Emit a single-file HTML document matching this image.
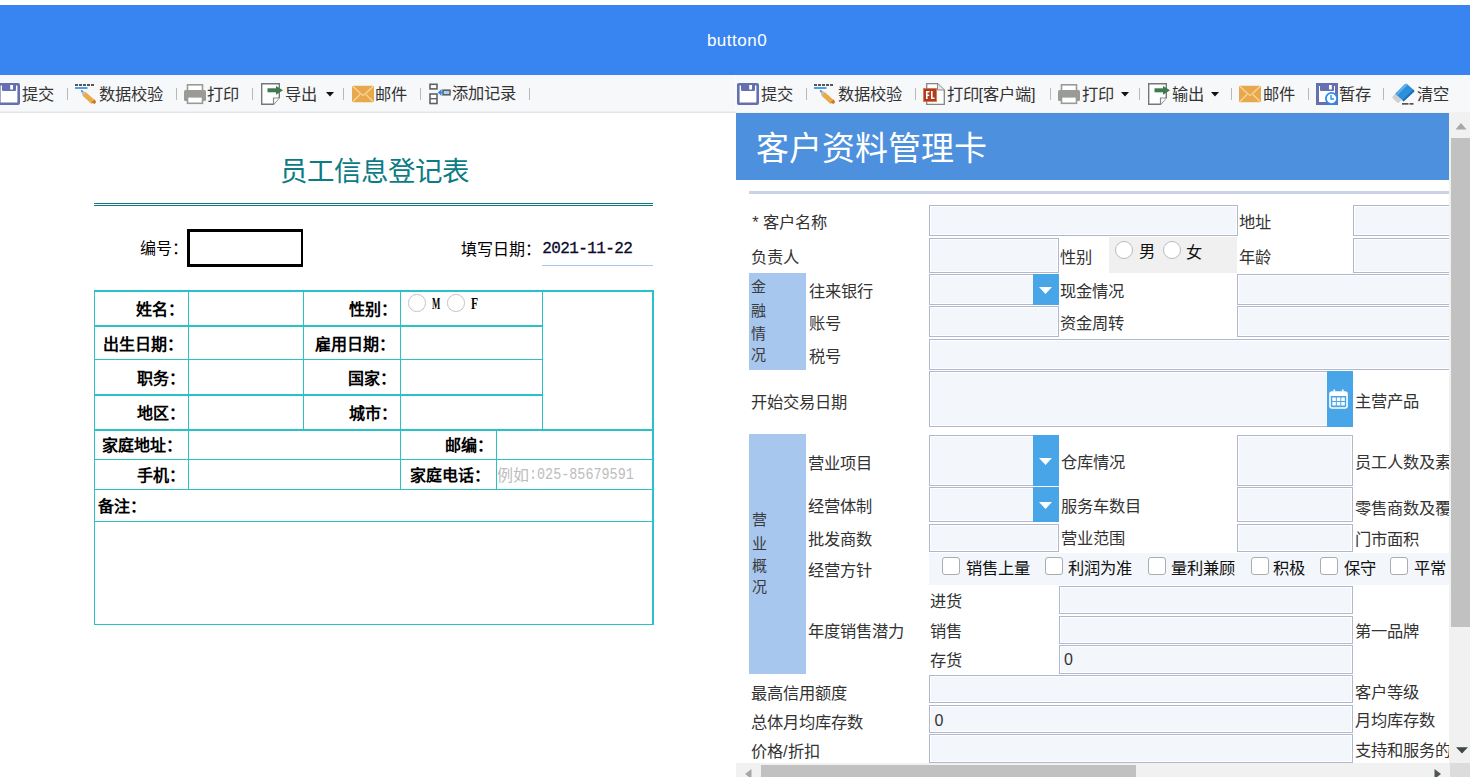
<!DOCTYPE html>
<html lang="zh-CN"><head><meta charset="utf-8"><title>form</title>
<style>
html,body{margin:0;padding:0;}
body{width:1470px;height:777px;overflow:hidden;position:relative;background:#fff;font-family:'Liberation Sans',sans-serif;}
.t{position:absolute;white-space:nowrap;}
.ab{position:absolute;}
.inp{position:absolute;box-sizing:border-box;border:1px solid #b3b7cb;background:#f3f6fa;box-shadow:inset 0 0 0 1px #fdfeff;}
.sep{position:absolute;top:88px;width:1px;height:12px;background:#b9b9b9;}
.cb{position:absolute;box-sizing:border-box;width:18px;height:18px;border:1.5px solid #a9adb0;border-radius:3px;background:#fff;}
.rd{position:absolute;box-sizing:border-box;width:18px;height:18px;border:1.5px solid #b8bcc2;border-radius:50%;background:#fff;}
</style></head><body>

<div class="ab" style="left:0px;top:5px;width:1470px;height:70px;background:#3885f1;"></div>
<div class="t" style="left:706.90px;top:33.00px;font-size:17px;line-height:16px;color:#fff;font-family:'Liberation Sans', sans-serif;letter-spacing:0.5px;">button0</div>
<div class="ab" style="left:0px;top:75px;width:1470px;height:38px;background:#f7f8fa;"></div>
<div class="ab" style="left:0px;top:111px;width:736px;height:1px;background:#eeeff2;"></div>
<div class="ab" style="left:0px;top:112px;width:736px;height:1px;background:#e3e4e7;"></div>
<div class="ab" style="left:736px;top:112px;width:734px;height:1px;background:#f4f1f1;"></div>
<div class="ab" style="left:735px;top:75px;width:1px;height:37px;background:#fbfbfc;"></div>
<svg class="ab" style="left:-2px;top:83px" width="22" height="22" viewBox="0 0 22 22">
<rect x="1.3" y="1.3" width="19.4" height="19.4" rx="0.6" fill="#fff" stroke="#6570b0" stroke-width="2.6"/>
<rect x="4" y="0" width="14" height="8" rx="1" fill="#6570b0"/>
<rect x="12.2" y="2" width="2.8" height="4.5" fill="#fff"/>
</svg>
<div class="t" style="left:22.00px;top:86.00px;font-size:16.25px;line-height:16.25px;color:#333;font-family:'Liberation Sans', sans-serif;">提交</div>
<div class="sep" style="left:67px"></div>
<svg class="ab" style="left:75px;top:83px" width="22" height="22" viewBox="0 0 22 22">
<g fill="#575757"><rect x="0" y="1" width="3" height="2"/><rect x="4" y="1" width="3" height="2"/><rect x="8" y="1" width="3" height="2"/><rect x="12" y="1" width="3" height="2"/><rect x="16" y="1" width="3" height="2"/></g>
<rect x="0" y="4" width="12.5" height="2" fill="#4aa0ea"/>
<line x1="9.3" y1="11" x2="18.2" y2="19.2" stroke="#e9ab48" stroke-width="5"/>
<path d="M5.8 7 L11.2 9.2 L7.7 12.8 Z" fill="#b9bdc6"/>
<path d="M5.8 7 L8 8 L6.9 9.3 Z" fill="#4f535a"/>
<path d="M16.5 19.5 L19.6 16.6 L21 18.4 Q21 20 19.4 21 Z" fill="#c8782a"/>
</svg>
<div class="t" style="left:98.50px;top:86.00px;font-size:16.25px;line-height:16.25px;color:#333;font-family:'Liberation Sans', sans-serif;">数据校验</div>
<div class="sep" style="left:176px"></div>
<svg class="ab" style="left:184px;top:83px" width="22" height="22" viewBox="0 0 22 22">
<rect x="3.5" y="1.8" width="15" height="8" fill="#fff" stroke="#9a9a96" stroke-width="1.6"/>
<rect x="0" y="7" width="22" height="11" rx="1.5" fill="#9a9a96"/>
<rect x="3.5" y="13.8" width="15" height="6.5" fill="#fff" stroke="#9a9a96" stroke-width="1.6"/>
</svg>
<div class="t" style="left:207.20px;top:86.00px;font-size:16.25px;line-height:16.25px;color:#333;font-family:'Liberation Sans', sans-serif;">打印</div>
<div class="sep" style="left:252px"></div>
<svg class="ab" style="left:261px;top:83px" width="22" height="22" viewBox="0 0 22 22">
<path d="M0.7 0.7 H18.3 V14.5 L12.5 21.3 H0.7 Z" fill="#fff" stroke="#777" stroke-width="1.4"/>
<path d="M12.5 21.3 V15 H18.3" fill="#fff" stroke="#888" stroke-width="1.2"/>
<rect x="6.5" y="5.3" width="9" height="4" fill="#3d7a4f"/>
<path d="M15 3 L22 7.3 L15 11.8 Z" fill="#3d7a4f"/>
</svg>
<div class="t" style="left:284.60px;top:86.00px;font-size:16.25px;line-height:16.25px;color:#333;font-family:'Liberation Sans', sans-serif;">导出</div>
<svg class="ab" style="left:326px;top:92px" width="8" height="5" viewBox="0 0 8 5"><path d="M0 0 H8 L4 4.6 Z" fill="#111"/></svg>
<div class="sep" style="left:343px"></div>
<svg class="ab" style="left:352px;top:83px" width="22" height="22" viewBox="0 0 22 22">
<rect x="0" y="2.8" width="22" height="16.4" rx="1.5" fill="#e8a84c"/>
<path d="M1 3.5 L9.5 11.5 L11 12.3 L12.5 11.5 L21 3.5" fill="none" stroke="#fbd69a" stroke-width="1.3"/>
<path d="M1 18.5 L8 11.5 M21 18.5 L14 11.5" fill="none" stroke="#fbd69a" stroke-width="1.3"/>
</svg>
<div class="t" style="left:375.20px;top:86.00px;font-size:16.25px;line-height:16.25px;color:#333;font-family:'Liberation Sans', sans-serif;">邮件</div>
<div class="sep" style="left:420px"></div>
<svg class="ab" style="left:429px;top:83px" width="22" height="22" viewBox="0 0 22 22">
<rect x="1" y="1.3" width="7" height="4.6" fill="#fff" stroke="#5f6360" stroke-width="1.6"/>
<rect x="1" y="11" width="7" height="9.5" fill="#fff" stroke="#5f6360" stroke-width="1.6"/>
<line x1="1" y1="15.7" x2="8" y2="15.7" stroke="#5f6360" stroke-width="1.4"/>
<rect x="14" y="7.2" width="7" height="4.6" fill="#a8d0f8" stroke="#5f6360" stroke-width="1.6"/>
<path d="M8.8 9.5 L12.5 6 L12.5 13 Z" fill="#2f86ef"/>
<rect x="12" y="8.7" width="2" height="1.6" fill="#2f86ef"/>
</svg>
<div class="t" style="left:452.00px;top:85.00px;font-size:16.25px;line-height:16.25px;color:#333;font-family:'Liberation Sans', sans-serif;">添加记录</div>
<div class="sep" style="left:529px"></div>
<svg class="ab" style="left:737px;top:83px" width="22" height="22" viewBox="0 0 22 22">
<rect x="1.3" y="1.3" width="19.4" height="19.4" rx="0.6" fill="#fff" stroke="#6570b0" stroke-width="2.6"/>
<rect x="4" y="0" width="14" height="8" rx="1" fill="#6570b0"/>
<rect x="12.2" y="2" width="2.8" height="4.5" fill="#fff"/>
</svg>
<div class="t" style="left:761.00px;top:86.00px;font-size:16.25px;line-height:16.25px;color:#333;font-family:'Liberation Sans', sans-serif;">提交</div>
<div class="sep" style="left:806px"></div>
<svg class="ab" style="left:814px;top:83px" width="22" height="22" viewBox="0 0 22 22">
<g fill="#575757"><rect x="0" y="1" width="3" height="2"/><rect x="4" y="1" width="3" height="2"/><rect x="8" y="1" width="3" height="2"/><rect x="12" y="1" width="3" height="2"/><rect x="16" y="1" width="3" height="2"/></g>
<rect x="0" y="4" width="12.5" height="2" fill="#4aa0ea"/>
<line x1="9.3" y1="11" x2="18.2" y2="19.2" stroke="#e9ab48" stroke-width="5"/>
<path d="M5.8 7 L11.2 9.2 L7.7 12.8 Z" fill="#b9bdc6"/>
<path d="M5.8 7 L8 8 L6.9 9.3 Z" fill="#4f535a"/>
<path d="M16.5 19.5 L19.6 16.6 L21 18.4 Q21 20 19.4 21 Z" fill="#c8782a"/>
</svg>
<div class="t" style="left:837.80px;top:86.00px;font-size:16.25px;line-height:16.25px;color:#333;font-family:'Liberation Sans', sans-serif;">数据校验</div>
<div class="sep" style="left:915px"></div>
<svg class="ab" style="left:923px;top:83px" width="22" height="22" viewBox="0 0 22 22">
<path d="M3.7 0.7 H14.5 L21.3 7 V21.3 H3.7 Z" fill="#fff" stroke="#858585" stroke-width="1.3"/>
<path d="M14.5 0.7 V7 H21.3" fill="#e8e8f0" stroke="#8a8a8a" stroke-width="1"/>
<rect x="0.3" y="5.3" width="13.4" height="13.4" fill="#b13b22"/>
<rect x="0.3" y="5.3" width="13.4" height="13.4" fill="none" stroke="#e0883a" stroke-width="0.6"/>
<path d="M3 8 H6.5 V9.5 H4.6 V11.5 H6.2 V13 H4.6 V16 H3 Z" fill="#fff"/>
<path d="M8 8 H9.6 V14.5 H11.5 V16 H8 Z" fill="#fff"/>
</svg>
<div class="t" style="left:946.60px;top:86.00px;font-size:16.25px;line-height:16.25px;color:#333;font-family:'Liberation Sans', sans-serif;">打印[客户端]</div>
<div class="sep" style="left:1050px"></div>
<svg class="ab" style="left:1058px;top:83px" width="22" height="22" viewBox="0 0 22 22">
<rect x="3.5" y="1.8" width="15" height="8" fill="#fff" stroke="#9a9a96" stroke-width="1.6"/>
<rect x="0" y="7" width="22" height="11" rx="1.5" fill="#9a9a96"/>
<rect x="3.5" y="13.8" width="15" height="6.5" fill="#fff" stroke="#9a9a96" stroke-width="1.6"/>
</svg>
<div class="t" style="left:1082.30px;top:86.00px;font-size:16.25px;line-height:16.25px;color:#333;font-family:'Liberation Sans', sans-serif;">打印</div>
<svg class="ab" style="left:1121px;top:92px" width="8" height="5" viewBox="0 0 8 5"><path d="M0 0 H8 L4 4.6 Z" fill="#111"/></svg>
<div class="sep" style="left:1139px"></div>
<svg class="ab" style="left:1148px;top:83px" width="22" height="22" viewBox="0 0 22 22">
<path d="M0.7 0.7 H18.3 V14.5 L12.5 21.3 H0.7 Z" fill="#fff" stroke="#777" stroke-width="1.4"/>
<path d="M12.5 21.3 V15 H18.3" fill="#fff" stroke="#888" stroke-width="1.2"/>
<rect x="6.5" y="5.3" width="9" height="4" fill="#3d7a4f"/>
<path d="M15 3 L22 7.3 L15 11.8 Z" fill="#3d7a4f"/>
</svg>
<div class="t" style="left:1172.30px;top:86.00px;font-size:16.25px;line-height:16.25px;color:#333;font-family:'Liberation Sans', sans-serif;">输出</div>
<svg class="ab" style="left:1211px;top:92px" width="8" height="5" viewBox="0 0 8 5"><path d="M0 0 H8 L4 4.6 Z" fill="#111"/></svg>
<div class="sep" style="left:1231px"></div>
<svg class="ab" style="left:1239px;top:83px" width="22" height="22" viewBox="0 0 22 22">
<rect x="0" y="2.8" width="22" height="16.4" rx="1.5" fill="#e8a84c"/>
<path d="M1 3.5 L9.5 11.5 L11 12.3 L12.5 11.5 L21 3.5" fill="none" stroke="#fbd69a" stroke-width="1.3"/>
<path d="M1 18.5 L8 11.5 M21 18.5 L14 11.5" fill="none" stroke="#fbd69a" stroke-width="1.3"/>
</svg>
<div class="t" style="left:1262.50px;top:86.00px;font-size:16.25px;line-height:16.25px;color:#333;font-family:'Liberation Sans', sans-serif;">邮件</div>
<div class="sep" style="left:1308px"></div>
<svg class="ab" style="left:1316px;top:83px" width="22" height="22" viewBox="0 0 22 22">
<rect x="1.5" y="1.5" width="19" height="19" fill="#fff" stroke="#6570b0" stroke-width="3"/>
<rect x="4" y="0" width="14" height="8" rx="1" fill="#6570b0"/>
<rect x="13" y="2" width="2.8" height="4.5" fill="#fff"/>
<circle cx="15.5" cy="15.5" r="5.6" fill="#fff" stroke="#2e8bef" stroke-width="1.8"/>
<path d="M15 12 V16 H18" fill="none" stroke="#2e8bef" stroke-width="1.4"/>
</svg>
<div class="t" style="left:1339.20px;top:86.00px;font-size:16.25px;line-height:16.25px;color:#333;font-family:'Liberation Sans', sans-serif;">暂存</div>
<div class="sep" style="left:1383px"></div>
<svg class="ab" style="left:1392px;top:83px" width="23" height="22" viewBox="0 0 23 22">
<path d="M3.2 10.8 L0.6 13.4 Q0 14.4 1 15.4 L5 19.4 Q6 20.2 7 19.4 L10 16.8 Z" fill="#d0d0d0"/>
<path d="M3.2 10.8 L12.8 1.2 Q13.9 0.3 15 1.1 L22 7.2 Q22.7 8 22 8.8 L11.6 18.2 Z" fill="#2e8fd9"/>
<path d="M22 7.3 Q22.7 8 22 8.8 L11.6 18.4 L10.4 17.2 L21.2 6.6 Z" fill="#1f6dc0"/>
<path d="M12.8 1.2 Q13.9 0.3 15 1.1 L15.8 1.8 L5 12.4 L3.9 11.4 Z" fill="#5bb2f2"/>
<rect x="10" y="20" width="6.5" height="1.7" fill="#555"/><rect x="17.5" y="20" width="4" height="1.7" fill="#555"/>
</svg>
<div class="t" style="left:1416.90px;top:86.00px;font-size:16.25px;line-height:16.25px;color:#333;font-family:'Liberation Sans', sans-serif;">清空</div>
<div class="t" style="left:279.80px;top:158.00px;font-size:27.5px;line-height:27.5px;color:#0b7c84;font-family:'Liberation Serif', serif;">员工信息登记表</div>
<div class="ab" style="left:94px;top:203px;width:559px;height:1px;background:#0b7c84;"></div>
<div class="ab" style="left:94px;top:205px;width:559px;height:1px;background:#0b7c84;"></div>
<div class="t" style="left:140.00px;top:241.00px;font-size:16px;line-height:16px;color:#000;font-family:'Liberation Serif', serif;">编号：</div>
<div class="ab" style="left:187px;top:229px;width:111px;height:32px;border:solid #000;border-width:3px 2px 3px 3px;"></div>
<div class="t" style="left:461.00px;top:241.50px;font-size:16px;line-height:16px;color:#000;font-family:'Liberation Serif', serif;">填写日期：</div>
<div class="t" style="left:542.20px;top:241.30px;font-size:16px;line-height:16px;color:#0a0a2a;font-family:'Liberation Mono', monospace;letter-spacing:-0.6px;-webkit-text-stroke:0.3px #0a0a2a;">2021-11-22</div>
<div class="ab" style="left:542px;top:265px;width:111px;height:1px;background:#9ecaf4;"></div>
<div class="ab" style="left:94px;top:290px;width:560px;height:2px;background:#29c3c7;"></div>
<div class="ab" style="left:94px;top:325px;width:449px;height:2px;background:#29c3c7;"></div>
<div class="ab" style="left:94px;top:359px;width:449px;height:1px;background:#29c3c7;"></div>
<div class="ab" style="left:94px;top:394px;width:449px;height:2px;background:#29c3c7;"></div>
<div class="ab" style="left:94px;top:429px;width:560px;height:2px;background:#29c3c7;"></div>
<div class="ab" style="left:94px;top:459px;width:560px;height:1px;background:#29c3c7;"></div>
<div class="ab" style="left:94px;top:489px;width:560px;height:1px;background:#29c3c7;"></div>
<div class="ab" style="left:94px;top:521px;width:560px;height:1px;background:#29c3c7;"></div>
<div class="ab" style="left:94px;top:624px;width:560px;height:1px;background:#29c3c7;"></div>
<div class="ab" style="left:94px;top:290px;width:1px;height:335px;background:#29c3c7;"></div>
<div class="ab" style="left:652px;top:290px;width:2px;height:335px;background:#29c3c7;"></div>
<div class="ab" style="left:188px;top:290px;width:1px;height:199px;background:#29c3c7;"></div>
<div class="ab" style="left:303px;top:290px;width:1px;height:139px;background:#29c3c7;"></div>
<div class="ab" style="left:400px;top:290px;width:1px;height:199px;background:#29c3c7;"></div>
<div class="ab" style="left:542px;top:290px;width:1px;height:139px;background:#29c3c7;"></div>
<div class="ab" style="left:496px;top:429px;width:1px;height:60px;background:#29c3c7;"></div>
<div class="t" style="left:136.20px;top:302.00px;font-size:16px;line-height:16px;color:#000;font-family:'Liberation Serif', serif;font-weight:bold;">姓名：</div>
<div class="t" style="left:349.10px;top:302.00px;font-size:16px;line-height:16px;color:#000;font-family:'Liberation Serif', serif;font-weight:bold;">性别：</div>
<div class="t" style="left:102.80px;top:336.80px;font-size:16px;line-height:16px;color:#000;font-family:'Liberation Serif', serif;font-weight:bold;">出生日期：</div>
<div class="t" style="left:314.90px;top:336.80px;font-size:16px;line-height:16px;color:#000;font-family:'Liberation Serif', serif;font-weight:bold;">雇用日期：</div>
<div class="t" style="left:137.30px;top:370.80px;font-size:16px;line-height:16px;color:#000;font-family:'Liberation Serif', serif;font-weight:bold;">职务：</div>
<div class="t" style="left:348.10px;top:370.80px;font-size:16px;line-height:16px;color:#000;font-family:'Liberation Serif', serif;font-weight:bold;">国家：</div>
<div class="t" style="left:137.30px;top:405.80px;font-size:16px;line-height:16px;color:#000;font-family:'Liberation Serif', serif;font-weight:bold;">地区：</div>
<div class="t" style="left:349.10px;top:405.80px;font-size:16px;line-height:16px;color:#000;font-family:'Liberation Serif', serif;font-weight:bold;">城市：</div>
<div class="t" style="left:102.30px;top:438.30px;font-size:16px;line-height:16px;color:#000;font-family:'Liberation Serif', serif;font-weight:bold;">家庭地址：</div>
<div class="t" style="left:445.30px;top:438.30px;font-size:16px;line-height:16px;color:#000;font-family:'Liberation Serif', serif;font-weight:bold;">邮编：</div>
<div class="t" style="left:137.30px;top:467.60px;font-size:16px;line-height:16px;color:#000;font-family:'Liberation Serif', serif;font-weight:bold;">手机：</div>
<div class="t" style="left:410.30px;top:467.60px;font-size:16px;line-height:16px;color:#000;font-family:'Liberation Serif', serif;font-weight:bold;">家庭电话：</div>
<div class="t" style="left:98.40px;top:499.10px;font-size:16px;line-height:16px;color:#000;font-family:'Liberation Serif', serif;font-weight:bold;">备注：</div>
<div class="rd" style="left:408px;top:294px;width:17.5px;height:17.5px;border-color:#bfc3c8"></div>
<div class="t" style="left:431.60px;top:295.60px;font-size:16px;line-height:16px;color:#000;font-family:'Liberation Serif', serif;font-weight:bold;transform:scaleX(0.55);transform-origin:0 0;">M</div>
<div class="rd" style="left:447px;top:294px;width:17.5px;height:17.5px;border-color:#bfc3c8"></div>
<div class="t" style="left:470.90px;top:295.60px;font-size:16px;line-height:16px;color:#000;font-family:'Liberation Serif', serif;font-weight:bold;transform:scaleX(0.72);transform-origin:0 0;">F</div>
<div class="t" style="left:496.80px;top:467.90px;font-size:16px;line-height:16px;color:#bdbdbd;font-family:'Liberation Sans', sans-serif;">例如<span style="display:inline-block;font-family:'Liberation Mono', monospace;font-size:17px;transform:scaleX(0.79);transform-origin:0 0;vertical-align:top;line-height:16px;position:relative;top:-0.5px">:025-85679591</span></div>
<div class="ab" style="left:736px;top:113px;width:713px;height:67px;background:#4c90de;"></div>
<div class="t" style="left:755.90px;top:133.00px;font-size:33px;line-height:32px;color:#fff;font-family:'Liberation Sans', sans-serif;">客户资料管理卡</div>
<div class="ab" style="left:749px;top:191px;width:700px;height:3px;background:#ccd3e7;"></div>
<div class="ab" style="left:736px;top:113px;width:713px;height:650px;overflow:hidden">
<div class="t" style="left:16.30px;top:100.80px;font-size:16.25px;line-height:16.25px;color:#333;font-family:'Liberation Sans', sans-serif;">* 客户名称</div>
<div class="inp" style="left:193px;top:92px;width:309px;height:31px"></div>
<div class="t" style="left:502.60px;top:101.00px;font-size:16.25px;line-height:16.25px;color:#333;font-family:'Liberation Sans', sans-serif;">地址</div>
<div class="inp" style="left:617px;top:92px;width:108px;height:31px"></div>
<div class="t" style="left:15.10px;top:135.80px;font-size:16.25px;line-height:16.25px;color:#333;font-family:'Liberation Sans', sans-serif;">负责人</div>
<div class="inp" style="left:193px;top:125px;width:130px;height:35px"></div>
<div class="t" style="left:324.40px;top:136.40px;font-size:16.25px;line-height:16.25px;color:#333;font-family:'Liberation Sans', sans-serif;">性别</div>
<div class="ab" style="left:373px;top:124px;width:128px;height:36px;background:#f0f0f0;"></div>
<div class="rd" style="left:379px;top:128px"></div>
<div class="t" style="left:402.90px;top:130.20px;font-size:16.25px;line-height:16.25px;color:#111;font-family:'Liberation Sans', sans-serif;">男</div>
<div class="rd" style="left:427px;top:128px"></div>
<div class="t" style="left:449.50px;top:131.20px;font-size:16.25px;line-height:16.25px;color:#111;font-family:'Liberation Sans', sans-serif;">女</div>
<div class="t" style="left:502.60px;top:136.00px;font-size:16.25px;line-height:16.25px;color:#333;font-family:'Liberation Sans', sans-serif;">年龄</div>
<div class="inp" style="left:617px;top:125px;width:108px;height:35px"></div>
<div class="ab" style="left:13px;top:160px;width:57px;height:97px;background:#a7c7ee;"></div>
<div class="t" style="left:15.10px;top:165.50px;font-size:15px;line-height:15px;color:#3a3a3a;font-family:'Liberation Sans', sans-serif;">金</div>
<div class="t" style="left:15.10px;top:189.50px;font-size:15px;line-height:15px;color:#3a3a3a;font-family:'Liberation Sans', sans-serif;">融</div>
<div class="t" style="left:15.10px;top:213.30px;font-size:15px;line-height:15px;color:#3a3a3a;font-family:'Liberation Sans', sans-serif;">情</div>
<div class="t" style="left:15.10px;top:234.30px;font-size:15px;line-height:15px;color:#3a3a3a;font-family:'Liberation Sans', sans-serif;">况</div>
<div class="t" style="left:72.80px;top:169.90px;font-size:16.25px;line-height:16.25px;color:#333;font-family:'Liberation Sans', sans-serif;">往来银行</div>
<div class="inp" style="left:193px;top:161px;width:130px;height:31px"></div>
<div class="ab" style="left:297px;top:161px;width:26px;height:31px;background:#47a5e8"><svg class="ab" style="left:6px;top:13px" width="13" height="7" viewBox="0 0 13 7"><path d="M0 0 H13 L6.5 7 Z" fill="#fff"/></svg></div>
<div class="t" style="left:324.20px;top:169.70px;font-size:16.25px;line-height:16.25px;color:#333;font-family:'Liberation Sans', sans-serif;">现金情况</div>
<div class="inp" style="left:501px;top:161px;width:224px;height:31px"></div>
<div class="t" style="left:72.80px;top:202.00px;font-size:16.25px;line-height:16.25px;color:#333;font-family:'Liberation Sans', sans-serif;">账号</div>
<div class="inp" style="left:193px;top:193px;width:130px;height:31px"></div>
<div class="t" style="left:324.20px;top:201.80px;font-size:16.25px;line-height:16.25px;color:#333;font-family:'Liberation Sans', sans-serif;">资金周转</div>
<div class="inp" style="left:501px;top:193px;width:224px;height:31px"></div>
<div class="t" style="left:72.80px;top:235.20px;font-size:16.25px;line-height:16.25px;color:#333;font-family:'Liberation Sans', sans-serif;">税号</div>
<div class="inp" style="left:193px;top:226px;width:532px;height:31px"></div>
<div class="t" style="left:15.00px;top:280.50px;font-size:16.25px;line-height:16.25px;color:#333;font-family:'Liberation Sans', sans-serif;">开始交易日期</div>
<div class="inp" style="left:193px;top:258px;width:424px;height:56px"></div>
<div class="ab" style="left:591px;top:258px;width:26px;height:56px;background:#47a5e8;"></div>
<svg class="ab" style="left:593px;top:276px" width="19" height="20" viewBox="0 0 19 20">
<rect x="1" y="3" width="17" height="16" rx="2" fill="none" stroke="#fff" stroke-width="1.6"/>
<rect x="1" y="3" width="17" height="4" fill="#fff"/>
<rect x="4.5" y="0.5" width="1.6" height="4" fill="#fff"/><rect x="13" y="0.5" width="1.6" height="4" fill="#fff"/>
<g fill="#fff"><rect x="3.3" y="8.5" width="3.5" height="3.5"/><rect x="7.8" y="8.5" width="3.5" height="3.5"/><rect x="12.3" y="8.5" width="3.5" height="3.5"/>
<rect x="3.3" y="13" width="3.5" height="3.5"/><rect x="7.8" y="13" width="3.5" height="3.5"/><rect x="12.3" y="13" width="3.5" height="3.5"/></g>
</svg>
<div class="t" style="left:618.60px;top:280.00px;font-size:16.25px;line-height:16.25px;color:#333;font-family:'Liberation Sans', sans-serif;">主营产品</div>
<div class="ab" style="left:13px;top:321px;width:57px;height:240px;background:#a7c7ee;"></div>
<div class="t" style="left:16.00px;top:399.00px;font-size:15px;line-height:15px;color:#3a3a3a;font-family:'Liberation Sans', sans-serif;">营</div>
<div class="t" style="left:16.00px;top:422.70px;font-size:15px;line-height:15px;color:#3a3a3a;font-family:'Liberation Sans', sans-serif;">业</div>
<div class="t" style="left:16.00px;top:444.80px;font-size:15px;line-height:15px;color:#3a3a3a;font-family:'Liberation Sans', sans-serif;">概</div>
<div class="t" style="left:16.00px;top:466.00px;font-size:15px;line-height:15px;color:#3a3a3a;font-family:'Liberation Sans', sans-serif;">况</div>
<div class="t" style="left:72.40px;top:342.00px;font-size:16.25px;line-height:16.25px;color:#333;font-family:'Liberation Sans', sans-serif;">营业项目</div>
<div class="inp" style="left:193px;top:322px;width:130px;height:51px"></div>
<div class="ab" style="left:297px;top:322px;width:26px;height:51px;background:#47a5e8"><svg class="ab" style="left:6px;top:23px" width="13" height="7" viewBox="0 0 13 7"><path d="M0 0 H13 L6.5 7 Z" fill="#fff"/></svg></div>
<div class="t" style="left:324.90px;top:341.40px;font-size:16.25px;line-height:16.25px;color:#333;font-family:'Liberation Sans', sans-serif;">仓库情况</div>
<div class="inp" style="left:501px;top:322px;width:116px;height:51px"></div>
<div class="t" style="left:619.40px;top:341.30px;font-size:16.25px;line-height:16.25px;color:#333;font-family:'Liberation Sans', sans-serif;">员工人数及素质</div>
<div class="t" style="left:72.40px;top:385.20px;font-size:16.25px;line-height:16.25px;color:#333;font-family:'Liberation Sans', sans-serif;">经营体制</div>
<div class="inp" style="left:193px;top:374px;width:130px;height:35px"></div>
<div class="ab" style="left:297px;top:374px;width:26px;height:35px;background:#47a5e8"><svg class="ab" style="left:6px;top:15px" width="13" height="7" viewBox="0 0 13 7"><path d="M0 0 H13 L6.5 7 Z" fill="#fff"/></svg></div>
<div class="t" style="left:324.90px;top:385.20px;font-size:16.25px;line-height:16.25px;color:#333;font-family:'Liberation Sans', sans-serif;">服务车数目</div>
<div class="inp" style="left:501px;top:374px;width:116px;height:35px"></div>
<div class="t" style="left:619.40px;top:386.80px;font-size:16.25px;line-height:16.25px;color:#333;font-family:'Liberation Sans', sans-serif;">零售商数及覆盖</div>
<div class="t" style="left:72.40px;top:418.40px;font-size:16.25px;line-height:16.25px;color:#333;font-family:'Liberation Sans', sans-serif;">批发商数</div>
<div class="inp" style="left:193px;top:411px;width:130px;height:28px"></div>
<div class="t" style="left:324.90px;top:417.10px;font-size:16.25px;line-height:16.25px;color:#333;font-family:'Liberation Sans', sans-serif;">营业范围</div>
<div class="inp" style="left:501px;top:411px;width:116px;height:28px"></div>
<div class="t" style="left:619.40px;top:418.00px;font-size:16.25px;line-height:16.25px;color:#333;font-family:'Liberation Sans', sans-serif;">门市面积</div>
<div class="t" style="left:72.40px;top:449.10px;font-size:16.25px;line-height:16.25px;color:#333;font-family:'Liberation Sans', sans-serif;">经营方针</div>
<div class="ab" style="left:193px;top:440px;width:540px;height:32px;background:#f3f6fa;"></div>
<div class="cb" style="left:206px;top:444px"></div>
<div class="t" style="left:229.60px;top:447.40px;font-size:16.25px;line-height:16.25px;color:#111;font-family:'Liberation Sans', sans-serif;">销售上量</div>
<div class="cb" style="left:309px;top:444px"></div>
<div class="t" style="left:332.40px;top:447.40px;font-size:16.25px;line-height:16.25px;color:#111;font-family:'Liberation Sans', sans-serif;">利润为准</div>
<div class="cb" style="left:412px;top:444px"></div>
<div class="t" style="left:435.40px;top:447.40px;font-size:16.25px;line-height:16.25px;color:#111;font-family:'Liberation Sans', sans-serif;">量利兼顾</div>
<div class="cb" style="left:515px;top:444px"></div>
<div class="t" style="left:537.10px;top:447.40px;font-size:16.25px;line-height:16.25px;color:#111;font-family:'Liberation Sans', sans-serif;">积极</div>
<div class="cb" style="left:584px;top:444px"></div>
<div class="t" style="left:607.60px;top:447.40px;font-size:16.25px;line-height:16.25px;color:#111;font-family:'Liberation Sans', sans-serif;">保守</div>
<div class="cb" style="left:654px;top:444px"></div>
<div class="t" style="left:678.30px;top:447.40px;font-size:16.25px;line-height:16.25px;color:#111;font-family:'Liberation Sans', sans-serif;">平常</div>
<div class="t" style="left:72.40px;top:510.30px;font-size:16.25px;line-height:16.25px;color:#333;font-family:'Liberation Sans', sans-serif;">年度销售潜力</div>
<div class="t" style="left:194.20px;top:480.20px;font-size:16.25px;line-height:16.25px;color:#333;font-family:'Liberation Sans', sans-serif;">进货</div>
<div class="t" style="left:194.20px;top:510.30px;font-size:16.25px;line-height:16.25px;color:#333;font-family:'Liberation Sans', sans-serif;">销售</div>
<div class="t" style="left:194.20px;top:539.40px;font-size:16.25px;line-height:16.25px;color:#333;font-family:'Liberation Sans', sans-serif;">存货</div>
<div class="inp" style="left:323px;top:473px;width:294px;height:28px"></div>
<div class="inp" style="left:323px;top:503px;width:294px;height:28px"></div>
<div class="inp" style="left:323px;top:532px;width:294px;height:29px"></div>
<div class="t" style="left:328.10px;top:538.70px;font-size:16px;line-height:16px;color:#333;font-family:'Liberation Sans', sans-serif;">0</div>
<div class="t" style="left:618.90px;top:509.70px;font-size:16.25px;line-height:16.25px;color:#333;font-family:'Liberation Sans', sans-serif;">第一品牌</div>
<div class="t" style="left:15.00px;top:571.50px;font-size:16.25px;line-height:16.25px;color:#333;font-family:'Liberation Sans', sans-serif;">最高信用额度</div>
<div class="inp" style="left:193px;top:562px;width:424px;height:28px"></div>
<div class="t" style="left:618.50px;top:571.00px;font-size:16.25px;line-height:16.25px;color:#333;font-family:'Liberation Sans', sans-serif;">客户等级</div>
<div class="t" style="left:15.00px;top:600.80px;font-size:16.25px;line-height:16.25px;color:#333;font-family:'Liberation Sans', sans-serif;">总体月均库存数</div>
<div class="inp" style="left:193px;top:592px;width:424px;height:28px"></div>
<div class="t" style="left:198.60px;top:599.50px;font-size:16px;line-height:16px;color:#333;font-family:'Liberation Sans', sans-serif;">0</div>
<div class="t" style="left:618.50px;top:599.40px;font-size:16.25px;line-height:16.25px;color:#333;font-family:'Liberation Sans', sans-serif;">月均库存数</div>
<div class="t" style="left:15.00px;top:629.80px;font-size:16.25px;line-height:16.25px;color:#333;font-family:'Liberation Sans', sans-serif;">价格/折扣</div>
<div class="inp" style="left:193px;top:621px;width:424px;height:29px"></div>
<div class="t" style="left:618.50px;top:628.70px;font-size:16.25px;line-height:16.25px;color:#333;font-family:'Liberation Sans', sans-serif;">支持和服务的质量</div>
</div>
<div class="ab" style="left:1449px;top:113px;width:21px;height:650px;background:#f1f1f1;"></div>
<svg class="ab" style="left:1455px;top:122px" width="12" height="8" viewBox="0 0 12 8"><path d="M0.5 7.5 L6 1 L11.5 7.5 Z" fill="#a3a9a8"/></svg>
<div class="ab" style="left:1451px;top:138px;width:19px;height:489px;background:#c1c1c1;"></div>
<svg class="ab" style="left:1455.5px;top:746.5px" width="12" height="7" viewBox="0 0 12 7"><path d="M0 0.3 H12 L6 6.6 Z" fill="#3f4848"/></svg>
<div class="ab" style="left:736px;top:763px;width:714px;height:14px;background:#f1f1f1;"></div>
<svg class="ab" style="left:744px;top:769px" width="8" height="10" viewBox="0 0 8 10"><path d="M7.5 0 L1 5 L7.5 10 Z" fill="#a3a9a8"/></svg>
<div class="ab" style="left:761px;top:765px;width:375px;height:12px;background:#c1c1c1;"></div>
<svg class="ab" style="left:1434px;top:769px" width="8" height="10" viewBox="0 0 8 10"><path d="M0.5 0 L7 5 L0.5 10 Z" fill="#4f5656"/></svg>
<div class="ab" style="left:1450px;top:763px;width:20px;height:14px;background:#dcdcdc;"></div>
</body></html>
